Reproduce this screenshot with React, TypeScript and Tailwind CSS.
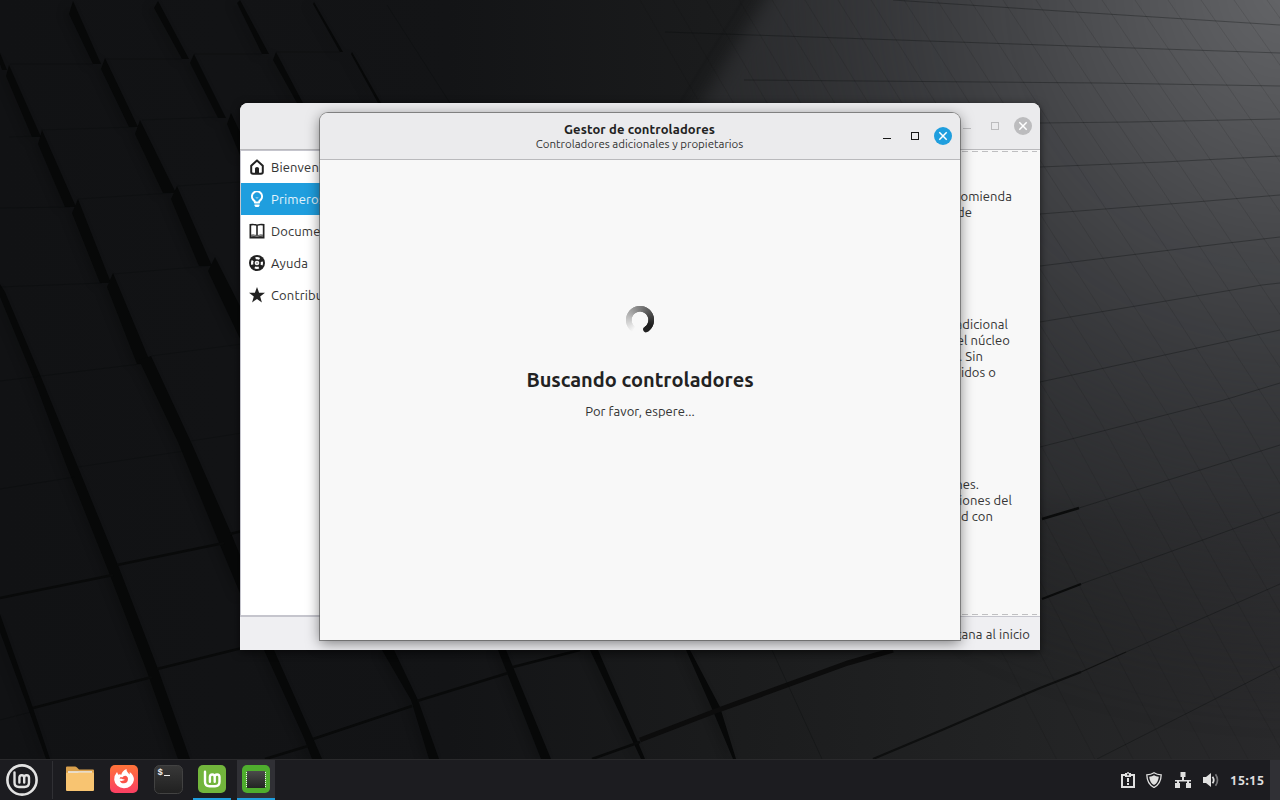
import type { ReactNode } from "react";

const strips = [
  "73,1 101,64 93,64 69,14", "158,1 189,59 182,59 154,8", "240,0 269,54 262,54 237,3", "314,2 343,52 340,52 313,4",
  "0,53 7,70 2,70 0,64", "9,65 41,137 32,137 6,76", "105,58 138,127 129,127 101,69", "194,54 226,118 218,118 190,63",
  "276,52 303,103 297,103 273,60", "352,52 381,103 378,103 351,54", "42,130 76,207 65,207 38,144",
  "140,120 176,193 163,193 135,134", "231,113 242,136 242,160 227,124", "78,199 111,283 100,283 72,213",
  "177,186 212,266 199,266 171,199", "113,273 151,364 137,364 107,287", "215,257 242,310 242,343 208,271",
  "5,292 41,377 33,377 0,297 0,284", "41,377 78,467 118,565 158,669 190,759 178,759 146,669 106,565 67,467 33,377",
  "151,356 191,442 231,533 242,560 242,598 220,545 178,442 139,360", "0,614 33,708 50,759 46,759 28,708 0,632",
  "264,650 274,650 313,738 322,759 312,759 304,738", "382,650 394,650 418,700 439,759 429,759 411,700",
  "498,650 506,650 551,759 541,759", "590,650 598,650 637,740 645,759 641,759", "686,650 690,650 720,707 736,759 733,759 713,711",
];

const deepSeams = [
  "M0 598L113 575", "M117 565L224 543", "M230 534L242 531", "M33 708L152 677", "M157 669L242 648", "M265 759L308 746",
  "M313 739L412 706", "M417 701L508 673", "M513 667L580 650", "M592 759L640 742",
];

const thinSeams = [
  "M0 489L75 477", "M78 467L184 451", "M191 441L242 433", "M0 720L31 712", "M9 137L38 136M41 130L135 127M142 120L220 117M105 59L182 59M194 54L262 54M276 52L340 52M10 64L93 64",
  "M0 208L70 207M78 199L171 193M177 186L240 182M0 287L102 283M113 274L208 266M0 381L140 364M151 356L242 344",
  "M387 5L450 103", "M893 0L1044 10L1280 25", "M665 32L1073 46L1280 53", "M744 80L1101 83L1280 86",
  "M1040 123L1130 122L1280 119", "M1040 167L1163 162L1280 156", "M1040 214L1195 202L1280 195", "M1040 266L1228 243L1280 237",
  "M1040 322L1262 285L1280 283", "M1040 382L1280 330", "M1040 447L1224 400L1280 383", "M1079 508L1280 445", "M1081 584L1280 512",
  "M1126 652L1280 584", "M1097 759L1280 666", "M772 650L822 759",
];

const diagonals = Array.from({ length: 23 }, (_, i) => {
  const x = 640 + i * 33;
  const slope = 0.58 + i * 0.007;
  return `M${x} 0L${x + slope * 420} 420L${x + slope * 420 + 340 * (slope - 0.07)} 760`;
});

function Wallpaper() {
  return (
    <svg className="absolute inset-0" width="1280" height="800" viewBox="0 0 1280 800">
      <defs>
        <linearGradient id="base" x1="0" y1="0" x2="1280" y2="0" gradientUnits="userSpaceOnUse">
          <stop offset="0" stopColor="#111214" />
          <stop offset="0.35" stopColor="#131416" />
          <stop offset="0.55" stopColor="#1a1b1c" />
          <stop offset="0.8" stopColor="#222324" />
          <stop offset="1" stopColor="#29292b" />
        </linearGradient>
        <radialGradient id="light" cx="1290" cy="-10" r="740" gradientUnits="userSpaceOnUse">
          <stop offset="0" stopColor="#646568" />
          <stop offset="0.3" stopColor="#4a4b4e" />
          <stop offset="0.5" stopColor="#3b3c3f" stopOpacity="0.95" />
          <stop offset="0.7" stopColor="#333437" stopOpacity="0.6" />
          <stop offset="1" stopColor="#2a2a2c" stopOpacity="0" />
        </radialGradient>
        <filter id="soft" x="-10%" y="-10%" width="120%" height="120%" colorInterpolationFilters="sRGB"><feGaussianBlur stdDeviation="9" /></filter>
        <filter id="edge" colorInterpolationFilters="sRGB"><feGaussianBlur stdDeviation="0.6" /></filter>
        <filter id="shade" colorInterpolationFilters="sRGB"><feGaussianBlur stdDeviation="4" /></filter>
      </defs>
      <rect width="1280" height="800" fill="url(#base)" />
      <path d="M785 -30L1320 -30L1320 500L1000 500L680 140Z" fill="#2c2d2f" opacity="0.6" filter="url(#soft)" />
      <path d="M785 -30L1320 -30L1320 830L1060 830L685 130Z" fill="url(#light)" filter="url(#soft)" />
      <g fill="#060707" opacity="0.3" filter="url(#shade)" transform="translate(-5 2)">
        {strips.map((s) => <polygon key={s} points={s} />)}
      </g>
      <g fill="#070808" filter="url(#edge)">
        {strips.map((s) => <polygon key={s} points={s} />)}
      </g>
      <g fill="none" stroke="#090a0a" strokeWidth="2.4" filter="url(#edge)">
        {deepSeams.map((s) => <path key={s} d={s} />)}
      </g>
      <path d="M640 740L713 712L848 663L893 650" fill="none" stroke="#0c0c0c" strokeWidth="5" filter="url(#edge)" />
      <path d="M873 759L942 730L993 708L1040 688L1081 672" fill="none" stroke="#0e0f0f" strokeWidth="2.2" filter="url(#edge)" />
      <path d="M1081 672L1126 652" fill="none" stroke="#101111" strokeWidth="1.2" />
      <path d="M1042 599L1081 584M1042 519L1079 508" stroke="#0b0c0c" strokeWidth="2.4" filter="url(#edge)" />
      <g fill="none" stroke="#08090a" strokeOpacity="0.3" strokeWidth="1">
        {thinSeams.map((s) => <path key={s} d={s} />)}
      </g>
      <g fill="none" stroke="#101114" strokeOpacity="0.12" strokeWidth="1">
        {diagonals.map((s) => <path key={s} d={s} />)}
      </g>
    </svg>
  );
}

function WindowButtons({ ink, disc }: { ink: string; disc: string }) {
  return (
    <svg width="70" height="18" viewBox="0 0 70 18">
      <path d="M1 11.5h8" stroke={ink} />
      <rect x="29.5" y="5.5" width="7" height="7" fill="none" stroke={ink} />
      <circle cx="61" cy="9" r="9" fill={disc} />
      <path d="M57.3 5.3l7.4 7.4M64.7 5.3l-7.4 7.4" stroke="#fff" strokeWidth="1.5" />
    </svg>
  );
}

function SideItem({ label, selected, children }: { label: string; selected?: boolean; children: ReactNode }) {
  return (
    <div className={selected ? "flex h-8 items-center gap-1.5 bg-[#1f9ede] pl-2 text-[#e6f4fc]" : "flex h-8 items-center gap-1.5 pl-2 text-[#333]"}>
      <svg width="16" height="16" viewBox="0 0 16 16" className={selected ? "text-white" : "text-[#222]"}>{children}</svg>
      <span className="whitespace-nowrap tracking-[0.15px]">{label}</span>
    </div>
  );
}

function Line({ width, children }: { width: string; children: ReactNode }) {
  return <p className={`flex h-4 justify-end whitespace-nowrap ${width}`}>{children}</p>;
}

function DashedEdge() {
  return (
    <svg className="block shrink-0" width="580" height="3" viewBox="0 0 580 3">
      <path d="M0 1.5H577" stroke="#bfbfc1" strokeDasharray="6 4" strokeDashoffset="8" />
    </svg>
  );
}

function WelcomeWindow() {
  return (
    <section className="absolute left-[240px] top-[103px] flex h-[547px] w-[800px] flex-col overflow-hidden rounded-t-lg bg-[#f8f8f8] text-[13px] leading-4 tracking-[0.08px] text-[#333] shadow-[0_2px_8px_rgba(0,0,0,0.6)]">
      <header className="flex h-[47px] shrink-0 items-center justify-end border-b border-[#b9b9bc] bg-[#ebebed] pr-2">
        <WindowButtons ink="#bcbcbe" disc="#bcbcbe" />
      </header>
      <div className="flex min-h-0 flex-1">
        <nav className="w-[220px] border border-[#c5c5cd] bg-white">
          <SideItem label="Bienvenida">
            <path d="M2.2 6.7L8 1.4l5.8 5.3V13q0 1.8-1.8 1.8H4Q2.2 14.8 2.2 13Z" fill="none" stroke="currentColor" strokeWidth="2" strokeLinejoin="round" />
            <path d="M6 15V9.6Q6 8 8 8t2 1.6V15Z" fill="currentColor" />
          </SideItem>
          <SideItem label="Primeros pasos" selected>
            <path d="M6.1 11.5Q5.8 9.8 4.1 8.6a5 5 0 1 1 7.8 0Q10.2 9.8 9.9 11.5Z" fill="none" stroke="currentColor" strokeWidth="2.1" strokeLinejoin="round" />
            <path d="M5.5 13.6h5v1.2l-1 1.2h-3l-1-1.2Z" fill="currentColor" />
            <path d="M6.2 6h3.6L8 8.2Z" fill="currentColor" opacity=".4" />
          </SideItem>
          <SideItem label="Documentación">
            <path d="M.5 1Q5 .3 8 1.5q3-1.2 7.5-.5V15.5H.5V1Z" fill="currentColor" />
            <path d="M2.2 2.5q3-.6 5 .3V12Q5 11.3 2.2 11.7ZM13.8 2.5q-3-.6-5 .3V12q2.2-.7 5-.3Z" fill="#fff" />
            <path d="M2 13q3-.7 6 .2 3-.9 6-.2" fill="none" stroke="#aaa" />
          </SideItem>
          <SideItem label="Ayuda">
            <circle cx="8" cy="8" r="8" fill="currentColor" />
            <circle cx="8" cy="8" r="4.9" fill="none" stroke="#fff" strokeWidth="2.2" strokeDasharray="4.2 3.497" strokeDashoffset="2.1" />
            <circle cx="8" cy="8" r="2.3" fill="#fff" />
            <path d="M8 6.8v2.4M6.8 8h2.4" stroke="#777" strokeWidth=".6" />
          </SideItem>
          <SideItem label="Contribuir">
            <path d="M8 0l2.1 5.7H16l-4.8 3.7 1.7 6L8 11.9l-4.9 3.5 1.7-6L0 5.7h5.9Z" fill="currentColor" />
          </SideItem>
        </nav>
        <main className="flex flex-1 flex-col">
          <DashedEdge />
          <div className="flex flex-1 flex-col pt-[35px]">
            <Line width="w-[552px]">omienda</Line>
            <Line width="w-[512px]">de</Line>
            <div className="mt-24">
              <Line width="w-[548px]">adicional</Line>
              <Line width="w-[550px]">el núcleo</Line>
              <Line width="w-[523px]">. Sin</Line>
              <Line width="w-[536px]">idos o</Line>
            </div>
            <div className="mt-24">
              <Line width="w-[519px]">nes.</Line>
              <Line width="w-[552px]">iones del</Line>
              <Line width="w-[533px]">d con</Line>
            </div>
          </div>
          <DashedEdge />
        </main>
      </div>
      <footer className="flex h-[34px] shrink-0 items-center justify-end border-t border-[#c5c5cd] bg-[#efeff2] pr-[10px]">ventana al inicio</footer>
    </section>
  );
}

function Spinner() {
  const count = 60;
  const start = 125;
  const sweep = 293;
  const at = (deg: number) => {
    const a = (deg * Math.PI) / 180;
    return `${14 + 11.2 * Math.cos(a)} ${14 + 11.2 * Math.sin(a)}`;
  };
  return (
    <svg width="28" height="28" viewBox="0 0 28 28" className="overflow-visible">
      {Array.from({ length: count }, (_, i) => {
        const a = start + (sweep * i) / count;
        const b = Math.min(start + sweep, start + (sweep * (i + 2.5)) / count);
        const c = Math.round(248 - 216 * Math.min(1, ((i + 1) / count) * 1.12));
        return <path key={i} d={`M${at(a)}A11.2 11.2 0 0 1 ${at(b)}`} fill="none" stroke={`rgb(${c},${c},${c})`} strokeWidth="5.6" strokeLinecap={i === count - 1 ? "round" : "butt"} />;
      })}
    </svg>
  );
}

function DriverWindow() {
  return (
    <section className="absolute left-[320px] top-[113px] flex h-[527px] w-[640px] flex-col rounded-t-lg bg-[#f8f8f8] shadow-[0_0_0_1px_rgba(80,80,80,0.6),0_3px_14px_rgba(0,0,0,0.5)]">
      <header className="grid h-[47px] shrink-0 grid-cols-[1fr_auto_1fr] items-center rounded-t-lg border-b border-[#b9b9bc] bg-[#ebebed] pr-2">
        <span />
        <div className="flex flex-col items-center pl-[7px]">
          <h1 className="h-4 whitespace-nowrap text-[13px] font-bold leading-4 tracking-[0.11px] text-[#222]">Gestor de controladores</h1>
          <p className="h-[14px] whitespace-nowrap text-[11.5px] leading-[14px] text-[#333]">Controladores adicionales y propietarios</p>
        </div>
        <div className="flex justify-end"><WindowButtons ink="#181818" disc="#1f9ede" /></div>
      </header>
      <div className="flex flex-1 flex-col items-center pt-[146px]">
        <Spinner />
        <h2 className="mt-[32px] whitespace-nowrap text-[20px] font-bold leading-7 text-[#222]">Buscando controladores</h2>
        <p className="mt-[9px] whitespace-nowrap text-[13px] leading-4 tracking-[0.05px] text-[#333]">Por favor, espere...</p>
      </div>
    </section>
  );
}

function MintMark() {
  return (
    <path
      d="M8.5 8.5v10q0 4.5 4.5 4.5h5.5q4.5 0 4.5-4.5v-4.7q0-2.6-2.4-2.6T18.2 13.8V18.5M18.2 13.8q0-2.6-2.4-2.6T13.4 13.8V18.5"
      fill="none"
      stroke="currentColor"
      strokeWidth="2.4"
      strokeLinecap="round"
      strokeLinejoin="round"
    />
  );
}

function Taskbar() {
  return (
    <footer className="absolute bottom-0 left-0 flex h-[41px] w-full items-stretch border-t border-[#2a2a2c] bg-[#1c1c20]">
      <div className="flex w-[52px] items-center pl-1.5">
        <svg width="32" height="32" viewBox="0 0 32 32" className="text-[#e2e2e2]">
          <circle cx="16" cy="16" r="14.6" fill="none" stroke="currentColor" strokeWidth="2.6" />
          <MintMark />
        </svg>
      </div>
      <div className="my-px w-px bg-[#303034]" />
      <div className="flex gap-1.5 pl-2">
        <div className="flex w-[38px] items-center justify-center pb-0.5">
          <svg width="28" height="28" viewBox="0 0 28 28">
            <path d="M0 2.5q0-1 1-1h8q1 0 2 1l2 2h14q1 0 1 1v7H0Z" fill="#d9a04c" />
            <path d="M2 6.2h24v4H2Z" fill="#e9e9e9" />
            <path d="M0 7.8h11.5l1.5-.3h14q1 0 1 1v16.5q0 1-1 1H1q-1 0-1-1Z" fill="#f8c471" />
          </svg>
        </div>
        <div className="flex w-[38px] items-center justify-center pb-0.5">
          <svg width="28" height="28" viewBox="0 0 28 28">
            <defs><linearGradient id="fox" x1="0" y1="0" x2="0" y2="1"><stop stopColor="#ff7439" /><stop offset="1" stopColor="#fb3f63" /></linearGradient></defs>
            <rect width="28" height="28" rx="5" fill="url(#fox)" />
            <path d="M4.200 14.700Q4 10.500 7 7l1.300 2.700q1.500-.8 3 .1Q12 6 16.500 4q-.3 2.200 1.700 4l1.500 1.600V7Q24.200 10.500 23.900 15a9.900 9.400 0 0 1-19.700-.3" fill="#fff" />
            <path d="M10.300 12.200q1.200-.3 1.900.3 1.700-2.500 4.200-1.600 2.300 1.500 1.500 4.200a4.200 4.200 0 0 1-8.100.3 4 4 0 0 0 3.400.2q1.400-.2 1.400-1.100-2.100 0-3-.8-.9-.4-1.900.2.100-.9.600-1.700" fill="#fb5349" />
          </svg>
        </div>
        <div className="flex w-[38px] items-center justify-center pb-px">
          <svg width="29" height="29" viewBox="0 0 29 29">
            <defs><linearGradient id="term" x1="0" y1="0" x2="0" y2="1"><stop stopColor="#383838" /><stop offset="1" stopColor="#202020" /></linearGradient></defs>
            <rect x=".5" y=".5" width="28" height="28" rx="5" fill="url(#term)" stroke="#424242" />
            <text x="3.5" y="9.5" fontFamily="Liberation Mono, monospace" fontSize="9" fontWeight="700" fill="#eee">$</text>
            <path d="M10 10.5h6" stroke="#eee" />
          </svg>
        </div>
        <div className="flex w-[38px] items-center justify-center border-b-2 border-[#1f9ede]">
          <svg width="28" height="28" viewBox="0 0 28 28" className="text-white">
            <rect width="28" height="28" rx="5" fill="#72b53c" />
            <g transform="translate(-1.5 -1.7)"><MintMark /></g>
          </svg>
        </div>
        <div className="flex w-[38px] items-center justify-center border-b-2 border-[#1f9ede] bg-[#303035]">
          <svg width="28" height="28" viewBox="0 0 28 28">
            <defs><linearGradient id="chip" x1="0" y1="0" x2="0" y2="1"><stop stopColor="#4b4b4b" /><stop offset="1" stopColor="#232523" /></linearGradient></defs>
            <rect width="28" height="28" rx="5" fill="#4fae2e" />
            <rect x="5" y="6" width="18" height="17" fill="url(#chip)" />
            <path d="M4.5 7v16M23.5 7v16" stroke="#eee" strokeDasharray="1 1" />
          </svg>
        </div>
      </div>
      <div className="flex flex-1 items-center justify-end text-[#e0e0e0]">
        <svg className="mr-[10px]" width="16" height="16" viewBox="0 0 16 16">
          <path d="M1 2h14v14H1Z" fill="currentColor" /><path d="M3 4h10v10H3Z" fill="#1c1c20" />
          <path d="M5 1h2a1 1 0 0 1 2 0h2v4H5Z" fill="currentColor" /><path d="M7 6h2v4H7Zm0 5h2v2H7Z" fill="currentColor" />
          <circle cx="8" cy="2.5" r="1" fill="#1c1c20" />
        </svg>
        <svg className="mr-[13px]" width="16" height="16" viewBox="0 0 16 16">
          <path d="M8 .7Q11 2.6 15.2 2.8 15 12 8 15.5 1 12 .8 2.8 5 2.6 8 .7Z" fill="none" stroke="currentColor" strokeWidth="1.3" />
          <path d="M8 3.2q2 1.2 4.8 1.5Q12.3 10.6 8 13.1 3.7 10.6 3.2 4.7 6 4.4 8 3.2Z" fill="currentColor" />
        </svg>
        <svg className="mr-3" width="16" height="16" viewBox="0 0 16 16">
          <path d="M5.5 0h5v5h-5ZM0 11h5v5H0ZM11 11h5v5h-5ZM7 4h2v5H7ZM0 8h16v1.6H0ZM2 9h2v3H2ZM12 9h2v3h-2Z" fill="currentColor" />
        </svg>
        <svg className="mr-[11px]" width="16" height="16" viewBox="0 0 16 16">
          <path d="M0 5h3l5-4v14l-5-4H0Z" fill="currentColor" />
          <path d="M9.5 4.7q2.5 3.3 0 6.6" fill="none" stroke="currentColor" strokeWidth="1.8" />
          <path d="M12.5 2.2q4 5.8 0 11.6" fill="none" stroke="#77777a" strokeWidth="1.7" />
        </svg>
        <time className="w-[35px] whitespace-nowrap text-[13px] font-semibold leading-4 tracking-[0.4px]">15:15</time>
        <div className="ml-[5px] h-full w-[10px] bg-[#303035]" />
      </div>
    </footer>
  );
}

export default function App() {
  return (
    <div className="relative h-[800px] w-[1280px] overflow-hidden bg-[#141517] font-['Ubuntu','Noto_Sans',sans-serif]">
      <Wallpaper />
      <WelcomeWindow />
      <DriverWindow />
      <Taskbar />
    </div>
  );
}
